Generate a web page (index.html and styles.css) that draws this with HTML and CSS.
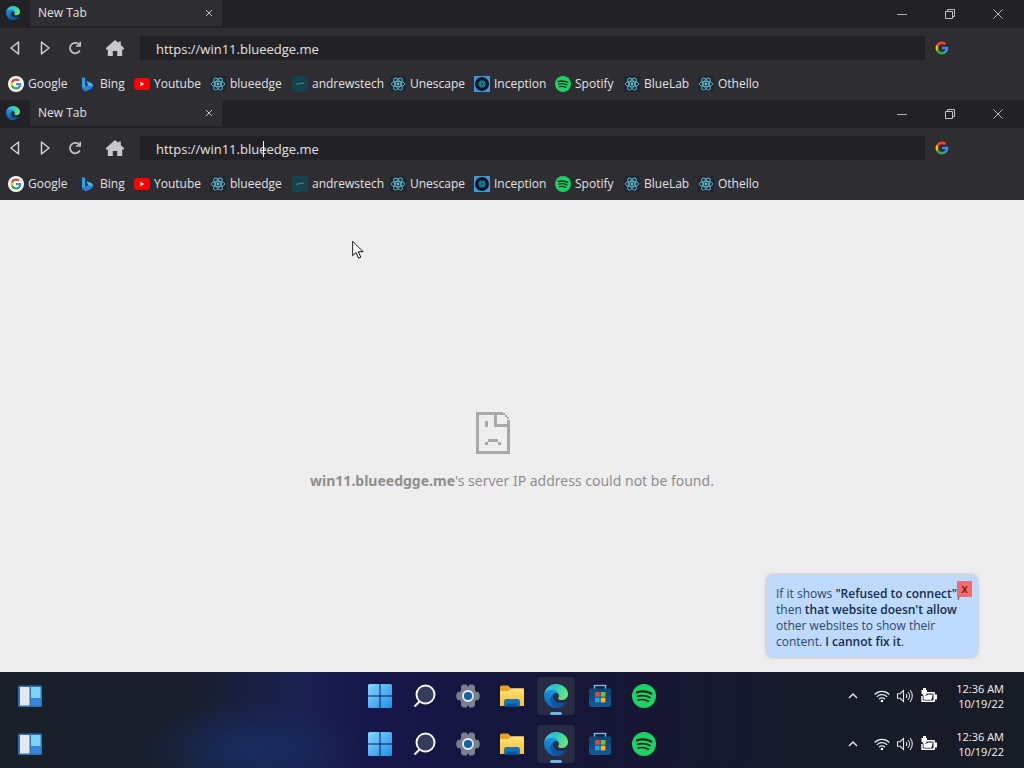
FILE: index.html
```
<!DOCTYPE html>
<html lang="en">
<head>
<meta charset="utf-8">
<meta name="viewport" content="width=device-width, initial-scale=1">
<title>New Tab</title>
<link rel="stylesheet" href="styles.css">
</head>
<body>
<svg class="sprite" aria-hidden="true">
  <defs>
    <linearGradient id="edge-a" x1=".2" y1=".5" x2="1" y2=".7"><stop offset="0" stop-color="#0c59a4"/><stop offset="1" stop-color="#114a8b"/></linearGradient>
    <linearGradient id="edge-b" x1=".7" y1="0" x2=".3" y2="1"><stop offset="0" stop-color="#1b9de2"/><stop offset=".5" stop-color="#1384cf"/><stop offset="1" stop-color="#0a60b0"/></linearGradient>
    <linearGradient id="edge-c" x1="0" y1=".3" x2="1" y2=".6"><stop offset="0" stop-color="#35c1f1"/><stop offset=".4" stop-color="#2fc3c6"/><stop offset="1" stop-color="#66eb6e"/></linearGradient>
    <linearGradient id="win" x1="0" y1="0" x2="1" y2="1"><stop offset="0" stop-color="#7fd8fd"/><stop offset="1" stop-color="#1d8fec"/></linearGradient>
    <linearGradient id="folder" x1="0" y1="0" x2="0" y2="1"><stop offset="0" stop-color="#ffe184"/><stop offset="1" stop-color="#fcc01f"/></linearGradient>
    <linearGradient id="bing" x1="0" y1="0" x2="1" y2="1"><stop offset="0" stop-color="#2a8cf0"/><stop offset="1" stop-color="#36b5e8"/></linearGradient>
    <linearGradient id="store" x1="0" y1="0" x2="0" y2="1"><stop offset="0" stop-color="#0c4676"/><stop offset="1" stop-color="#145a94"/></linearGradient>
  </defs>
  <symbol id="i-edge" viewBox="0 0 256 256"><g transform="translate(-4.6 -4.9)">
    <path fill="url(#edge-a)" d="M235.68 195.46a93.73 93.73 0 01-10.54 4.71 101.87 101.87 0 01-35.9 6.46c-47.32 0-88.54-32.55-88.54-74.32A31.48 31.48 0 01117.13 105c-42.8 1.8-53.8 46.4-53.8 72.53 0 73.88 68.09 81.37 82.76 81.37 7.91 0 19.84-2.3 27-4.56l1.31-.44a128.34 128.34 0 0066.6-52.8 4 4 0 00-5.32-5.64z"/>
    <path fill="url(#edge-b)" d="M110.34 246.34A79.2 79.2 0 0187.6 225a80.72 80.72 0 0129.53-120c3.12-1.47 8.45-4.13 15.54-4a32.35 32.35 0 0125.69 13 31.88 31.88 0 016.36 18.66c0-.21 24.46-79.6-80-79.6-43.9 0-80 41.66-80 78.21a130.15 130.15 0 0012.11 56 128 128 0 00156.38 67.11 75.55 75.55 0 01-62.78-8z"/>
    <path fill="url(#edge-c)" d="M156.94 153.78c-.81 1.05-3.3 2.5-3.3 5.66 0 2.61 1.7 5.12 4.72 7.23 14.38 10 41.49 8.68 41.56 8.68a59.56 59.56 0 0030.27-8.35 61.38 61.38 0 0030.43-52.88c.26-22.41-8-37.31-11.34-43.91-21.19-41.45-66.93-65.29-116.67-65.29a128 128 0 00-128 126.2c.48-36.54 36.8-66.05 80-66.05 3.5 0 23.46.34 42 10.07 16.34 8.58 24.9 18.94 30.85 29.21 6.18 10.67 7.28 24.15 7.28 29.52s-2.74 13.33-7.8 19.91z"/></g></symbol>
  <symbol id="i-g" viewBox="0 0 24 24">
    <path fill="#4285f4" d="M22.56 12.25c0-.78-.07-1.53-.2-2.25H12v4.26h5.92c-.26 1.37-1.04 2.53-2.21 3.31v2.77h3.57c2.08-1.92 3.28-4.74 3.28-8.09z"/>
    <path fill="#34a853" d="M12 23c2.97 0 5.46-.98 7.28-2.66l-3.57-2.77c-.98.66-2.23 1.06-3.71 1.06-2.86 0-5.29-1.93-6.16-4.53H2.18v2.84C3.99 20.53 7.7 23 12 23z"/>
    <path fill="#fbbc05" d="M5.84 14.09c-.22-.66-.35-1.36-.35-2.09s.13-1.43.35-2.09V7.07H2.18C1.43 8.55 1 10.22 1 12s.43 3.45 1.18 4.93l3.66-2.84z"/>
    <path fill="#ea4335" d="M12 5.38c1.62 0 3.06.56 4.21 1.64l3.15-3.15C17.45 2.09 14.97 1 12 1 7.7 1 3.99 3.47 2.18 7.07l3.66 2.84c.87-2.6 3.3-4.53 6.16-4.53z"/></symbol>
  <symbol id="i-google" viewBox="0 0 16 16"><circle cx="8" cy="8" r="8" fill="#fff"/><use href="#i-g" x="2" y="2" width="12" height="12"/></symbol>
  <symbol id="i-bing" viewBox="0 0 16 16"><path fill="url(#bing)" d="M2 1l3.200 1v8.600L2 12.800z"/><path fill="#2f7fe0" d="M2 12.800l3.200-2.300 3-1.500 4.500-.4c.2 2-.6 3.600-1.800 4.400L5.500 15.500z"/><path fill="#45b8ee" d="M6.300 5l5 2c1.300.5 1.700 2 1.400 3.600L8.200 9.300z"/></symbol>
  <symbol id="i-youtube" viewBox="0 0 16 16"><rect y="2" width="16" height="12" rx="3" fill="#f00"/><path fill="#fff" d="M6.500 5.800v4.400L10.300 8z"/></symbol>
  <symbol id="i-react" viewBox="0 0 16 16"><rect width="16" height="16" rx="2" fill="#20262f"/><g fill="none" stroke="#5fb9cd" stroke-width=".9"><ellipse cx="8" cy="8" rx="6.800" ry="2.700"/><ellipse cx="8" cy="8" rx="6.800" ry="2.700" transform="rotate(60 8 8)"/><ellipse cx="8" cy="8" rx="6.800" ry="2.700" transform="rotate(120 8 8)"/></g><circle cx="8" cy="8" r="1.400" fill="#61c5da"/></symbol>
  <symbol id="i-andrews" viewBox="0 0 16 16"><rect width="16" height="16" fill="#17414b"/><path d="M4 8.500l3-.8 5-.5" stroke="#3f7f8b" stroke-width="1.200" fill="none"/></symbol>
  <symbol id="i-inception" viewBox="0 0 16 16"><rect width="16" height="16" fill="#3a9be4"/><circle cx="8" cy="8" r="7" fill="#06151f"/><circle cx="8" cy="8" r="3.700" fill="#0b4250"/><g fill="none" stroke="#1c8ea5" stroke-width=".7"><ellipse cx="8" cy="8" rx="3.600" ry="1.500"/><ellipse cx="8" cy="8" rx="3.600" ry="1.500" transform="rotate(60 8 8)"/><ellipse cx="8" cy="8" rx="3.600" ry="1.500" transform="rotate(120 8 8)"/></g></symbol>
  <symbol id="i-spotify" viewBox="0 0 24 24"><circle cx="12" cy="12" r="12" fill="#1fd164"/><g fill="none" stroke="#152b1d" stroke-linecap="round"><path d="M5 8.300c5-1.400 10-1 14.200 1.300" stroke-width="2.300"/><path d="M5.600 12.300c4.300-1.200 8.600-.8 12.200 1.200" stroke-width="1.900"/><path d="M6.200 16c3.600-.9 7-.6 10.200 1.200" stroke-width="1.600"/></g></symbol>
  <symbol id="i-back" viewBox="0 0 16 16"><path d="M11.500 2v12L4 8z" fill="none" stroke="#d2d2d4" stroke-width="1.500" stroke-linejoin="round"/></symbol>
  <symbol id="i-forward" viewBox="0 0 16 16"><path d="M4.500 2v12L12 8z" fill="none" stroke="#d2d2d4" stroke-width="1.500" stroke-linejoin="round"/></symbol>
  <symbol id="i-reload" viewBox="0 0 16 16"><path d="M12.500 5.200A5.200 5.200 0 1 0 12.800 10.500" fill="none" stroke="#c6c6c9" stroke-width="1.700"/><path d="M14 1.700v5.100H8.900V5.300h3.500V1.700z" fill="#c6c6c9"/></symbol>
  <symbol id="i-home" viewBox="0 0 20 18"><path fill="#c9c9cd" d="M10 1l3.500 3V2.500h2.300V6L19 9v1.500h-1.800V17h-5v-5H7.800v5h-5v-6.500H1V9z"/></symbol>
  <symbol id="i-tabclose" viewBox="0 0 8 8"><path d="M1 1l6 6M7 1L1 7" stroke="#c4c4c6" stroke-width="1"/></symbol>
  <symbol id="i-min" viewBox="0 0 12 12"><path d="M1 6.500h10" stroke="#b0b0b2"/></symbol>
  <symbol id="i-restore" viewBox="0 0 12 12"><path d="M1.500 3.500h7v7h-7zM3.500 3V1.500h7v7H9" fill="none" stroke="#c4c4c6"/></symbol>
  <symbol id="i-close" viewBox="0 0 12 12"><path d="M1.500 1.500l9 9M10.500 1.500l-9 9" stroke="#c0c0c2"/></symbol>
  <symbol id="i-sad" viewBox="0 0 34 42" shape-rendering="crispEdges"><g fill="#a8a8a8"><path d="M0 0h27v3H3v36h28V15H18V0h3v12h10V8h3v34H0z"/><path d="M27 1h2v2h-2zM29 3h2v2h-2zM31 5h2v2h-2zM9 9h3v6H9zM12 27h10v3H12zM9 30h3v3H9zM22 30h3v3h-3z"/></g></symbol>
  <symbol id="i-widgets" viewBox="0 0 24 24"><rect y="1.500" width="24" height="21.500" rx="1.500" fill="#2d72b3"/><rect x="2" y="3" width="9.500" height="18.500" fill="#e8e8f3"/><rect x="13" y="3" width="9.500" height="11" fill="#7fd3fb"/><rect x="13" y="14" width="9.500" height="7.500" fill="#3788da"/></symbol>
  <symbol id="i-start" viewBox="0 0 24 24"><path fill="url(#win)" d="M1.500 0h10v11.500H0v-10A1.500 1.500 0 0 1 1.500 0zM12.500 0h10A1.500 1.500 0 0 1 24 1.500v10H12.500zM0 12.500h11.500V24h-10A1.500 1.500 0 0 1 0 22.500zM12.500 12.500H24v10a1.500 1.500 0 0 1-1.500 1.500h-10z"/></symbol>
  <symbol id="i-search" viewBox="0 0 24 24"><path d="M8 17L2.500 22.500" stroke="#f5f5fa" stroke-width="2.200"/><circle cx="13.500" cy="10.500" r="9" fill="#343c5c" stroke="#f5f5fa" stroke-width="2"/></symbol>
  <symbol id="i-settings" viewBox="0 0 24 24"><path fill="#78818d" stroke="#78818d" stroke-width="2" stroke-linejoin="round" d="M8 1.500h2l1 2h2l1-2h2l2 1v4l1.500 2.500H22l1 3-1 3h-2.500L18 17.500v4l-2 1h-2l-1-2h-2l-1 2H8l-2-1v-4L4.500 15H2l-1-3 1-3h2.500L6 6.500v-4z"/><circle cx="12" cy="12" r="5" fill="#1762a5" stroke="#e8eef5" stroke-width="1.800"/></symbol>
  <symbol id="i-folder" viewBox="0 0 24 24"><path fill="#e9a320" d="M0 3a1.500 1.500 0 0 1 1.500-1.500H8l3 2.700h11.500A1.500 1.500 0 0 1 24 5.700V12H0z"/><path fill="url(#folder)" d="M0 7h8.500l3-2.500H24V22H0z"/><path fill="#1872bb" d="M4 22.500v-5A2.500 2.500 0 0 1 6.500 15h11a2.500 2.500 0 0 1 2.500 2.500v5z"/><path fill="#0f559a" d="M7 19.500h10v3H7z"/></symbol>
  <symbol id="i-store" viewBox="0 0 24 24"><path d="M6.500 6V1.500h11V6" fill="none" stroke="#69b9dc" stroke-width="1.600"/><path fill="url(#store)" d="M1 4.500h22V20a3 3 0 0 1-3 3H4a3 3 0 0 1-3-3z"/><path fill="#e04b35" d="M7 8h4.700v4.700H7z"/><path fill="#7bb82d" d="M12.700 8h4.700v4.700h-4.700z"/><path fill="#21a2e8" d="M7 13.700h4.700v4.700H7z"/><path fill="#fbb91c" d="M12.700 13.700h4.700v4.700h-4.700z"/></symbol>
  <symbol id="i-chevron" viewBox="0 0 12 12"><path d="M2 8l4-4 4 4" fill="none" stroke="#eee" stroke-width="1.300"/></symbol>
  <symbol id="i-wifi" viewBox="0 0 16 16"><g fill="none" stroke="#e8eaee" stroke-width="1.200"><path d="M.7 6.500a10.300 10.300 0 0 1 14.600 0M2.800 8.900a7.300 7.300 0 0 1 10.400 0M5 11.200a4.200 4.200 0 0 1 6 0"/></g><circle cx="8" cy="13" r="1.300" fill="#fff"/></symbol>
  <symbol id="i-sound" viewBox="0 0 18 16"><path d="M1.500 5.700h2.600L7.500 2.500v11L4.100 10.300H1.500zM10 6a3 3 0 0 1 0 4M12 4a6 6 0 0 1 0 8M14 2a9 9 0 0 1 0 12" fill="none" stroke="#e0e3e8" stroke-width="1.100"/></symbol>
  <symbol id="i-battery" viewBox="0 0 18 16"><path d="M7 4.700h7.200v8.600H2V8" fill="none" stroke="#fff" stroke-width="1.500" stroke-linejoin="round"/><path fill="#fff" d="M15 6.500h2v5h-2zM3.500 9.500L8 6.500h4.700l-1.200 5.300h-8zM3 0h3v2h1v3.500L5.500 7.500v3h-2v-3L1.500 5.500V2H3z"/></symbol>
  <symbol id="i-cursor" viewBox="0 0 12 19"><path d="M.7 1.200v14.500l3.400-3.200 2.400 5.700 2.300-1-2.400-5.500h4.700z" fill="#fff" stroke="#111" stroke-width="1"/></symbol>
</svg>

<main class="desktop">
  <header class="browser">
    <div class="tabbar">
      <svg class="app-icon"><use href="#i-edge"/></svg>
      <div class="tab"><span>New Tab</span><button class="plain" aria-label="Close tab"><svg class="s8"><use href="#i-tabclose"/></svg></button></div>
      <div class="window-buttons">
        <button class="plain" aria-label="Minimize"><svg class="s12"><use href="#i-min"/></svg></button>
        <button class="plain" aria-label="Restore"><svg class="s12"><use href="#i-restore"/></svg></button>
        <button class="plain" aria-label="Close"><svg class="s12"><use href="#i-close"/></svg></button>
      </div>
    </div>
    <div class="toolbar">
      <div class="nav">
        <button class="plain" aria-label="Back"><svg class="s16"><use href="#i-back"/></svg></button>
        <button class="plain" aria-label="Forward"><svg class="s16"><use href="#i-forward"/></svg></button>
        <button class="plain" aria-label="Reload"><svg class="s16"><use href="#i-reload"/></svg></button>
        <button class="plain home" aria-label="Home"><svg class="s20"><use href="#i-home"/></svg></button>
      </div>
      <div class="address-wrap">
        <input class="address" type="text" aria-label="Address" value="https://win11.blueedge.me">
      </div>
      <button class="plain engine" aria-label="Search with Google"><svg class="s14"><use href="#i-g"/></svg></button>
    </div>
    <nav class="bookmarks" aria-label="Bookmarks">
      <a href="#"><svg class="s16"><use href="#i-google"/></svg>Google</a>
      <a href="#"><svg class="s16"><use href="#i-bing"/></svg>Bing</a>
      <a href="#"><svg class="s16"><use href="#i-youtube"/></svg>Youtube</a>
      <a href="#"><svg class="s16"><use href="#i-react"/></svg>blueedge</a>
      <a href="#"><svg class="s16"><use href="#i-andrews"/></svg>andrewstech</a>
      <a href="#"><svg class="s16"><use href="#i-react"/></svg>Unescape</a>
      <a href="#"><svg class="s16"><use href="#i-inception"/></svg>Inception</a>
      <a href="#"><svg class="s16"><use href="#i-spotify"/></svg>Spotify</a>
      <a href="#"><svg class="s16"><use href="#i-react"/></svg>BlueLab</a>
      <a href="#"><svg class="s16"><use href="#i-react"/></svg>Othello</a>
    </nav>
  </header>

  <header class="browser">
    <div class="tabbar">
      <svg class="app-icon"><use href="#i-edge"/></svg>
      <div class="tab"><span>New Tab</span><button class="plain" aria-label="Close tab"><svg class="s8"><use href="#i-tabclose"/></svg></button></div>
      <div class="window-buttons">
        <button class="plain" aria-label="Minimize"><svg class="s12"><use href="#i-min"/></svg></button>
        <button class="plain" aria-label="Restore"><svg class="s12"><use href="#i-restore"/></svg></button>
        <button class="plain" aria-label="Close"><svg class="s12"><use href="#i-close"/></svg></button>
      </div>
    </div>
    <div class="toolbar">
      <div class="nav">
        <button class="plain" aria-label="Back"><svg class="s16"><use href="#i-back"/></svg></button>
        <button class="plain" aria-label="Forward"><svg class="s16"><use href="#i-forward"/></svg></button>
        <button class="plain" aria-label="Reload"><svg class="s16"><use href="#i-reload"/></svg></button>
        <button class="plain home" aria-label="Home"><svg class="s20"><use href="#i-home"/></svg></button>
      </div>
      <div class="address-wrap">
        <input class="address" type="text" aria-label="Address" value="https://win11.blueedge.me">
        <span class="caret"></span>
      </div>
      <button class="plain engine" aria-label="Search with Google"><svg class="s14"><use href="#i-g"/></svg></button>
    </div>
    <nav class="bookmarks" aria-label="Bookmarks">
      <a href="#"><svg class="s16"><use href="#i-google"/></svg>Google</a>
      <a href="#"><svg class="s16"><use href="#i-bing"/></svg>Bing</a>
      <a href="#"><svg class="s16"><use href="#i-youtube"/></svg>Youtube</a>
      <a href="#"><svg class="s16"><use href="#i-react"/></svg>blueedge</a>
      <a href="#"><svg class="s16"><use href="#i-andrews"/></svg>andrewstech</a>
      <a href="#"><svg class="s16"><use href="#i-react"/></svg>Unescape</a>
      <a href="#"><svg class="s16"><use href="#i-inception"/></svg>Inception</a>
      <a href="#"><svg class="s16"><use href="#i-spotify"/></svg>Spotify</a>
      <a href="#"><svg class="s16"><use href="#i-react"/></svg>BlueLab</a>
      <a href="#"><svg class="s16"><use href="#i-react"/></svg>Othello</a>
    </nav>
  </header>

  <section class="page">
    <div class="error">
      <svg class="sad"><use href="#i-sad"/></svg>
      <p><b>win11.blueedgge.me</b>'s server IP address could not be found.</p>
    </div>
    <aside class="notice">
      <button class="notice-close" aria-label="Close notice">x</button>
      <p>If it shows <b>"Refused to connect"</b>, then <b>that website doesn't allow</b> other websites to show their content. <b>I cannot fix it</b>.</p>
    </aside>
    <svg class="cursor" aria-hidden="true"><use href="#i-cursor"/></svg>
  </section>

  <footer class="taskbars">
    <div class="taskbar">
      <button class="plain widgets" aria-label="Widgets"><svg class="s24"><use href="#i-widgets"/></svg></button>
      <div class="apps">
        <button class="plain app" aria-label="Start"><svg class="s24"><use href="#i-start"/></svg></button>
        <button class="plain app" aria-label="Search"><svg class="s24"><use href="#i-search"/></svg></button>
        <button class="plain app" aria-label="Settings"><svg class="s24"><use href="#i-settings"/></svg></button>
        <button class="plain app" aria-label="File Explorer"><svg class="s24"><use href="#i-folder"/></svg></button>
        <button class="plain app active" aria-label="Edge"><svg class="s24"><use href="#i-edge"/></svg></button>
        <button class="plain app" aria-label="Store"><svg class="s24"><use href="#i-store"/></svg></button>
        <button class="plain app" aria-label="Spotify"><svg class="s24"><use href="#i-spotify"/></svg></button>
      </div>
      <div class="tray">
        <button class="plain more" aria-label="Show hidden icons"><svg class="s12"><use href="#i-chevron"/></svg></button>
        <button class="plain status" aria-label="Network, sound, battery"><svg class="s16"><use href="#i-wifi"/></svg><svg class="wide"><use href="#i-sound"/></svg><svg class="wide"><use href="#i-battery"/></svg></button>
        <div class="clock"><span>12:36 AM</span><span>10/19/22</span></div>
      </div>
    </div>
    <div class="taskbar">
      <button class="plain widgets" aria-label="Widgets"><svg class="s24"><use href="#i-widgets"/></svg></button>
      <div class="apps">
        <button class="plain app" aria-label="Start"><svg class="s24"><use href="#i-start"/></svg></button>
        <button class="plain app" aria-label="Search"><svg class="s24"><use href="#i-search"/></svg></button>
        <button class="plain app" aria-label="Settings"><svg class="s24"><use href="#i-settings"/></svg></button>
        <button class="plain app" aria-label="File Explorer"><svg class="s24"><use href="#i-folder"/></svg></button>
        <button class="plain app active" aria-label="Edge"><svg class="s24"><use href="#i-edge"/></svg></button>
        <button class="plain app" aria-label="Store"><svg class="s24"><use href="#i-store"/></svg></button>
        <button class="plain app" aria-label="Spotify"><svg class="s24"><use href="#i-spotify"/></svg></button>
      </div>
      <div class="tray">
        <button class="plain more" aria-label="Show hidden icons"><svg class="s12"><use href="#i-chevron"/></svg></button>
        <button class="plain status" aria-label="Network, sound, battery"><svg class="s16"><use href="#i-wifi"/></svg><svg class="wide"><use href="#i-sound"/></svg><svg class="wide"><use href="#i-battery"/></svg></button>
        <div class="clock"><span>12:36 AM</span><span>10/19/22</span></div>
      </div>
    </div>
  </footer>
</main>
</body>
</html>
```
FILE: styles.css
```
* { box-sizing: border-box; }
body {
  margin: 0;
  font: 12px/16px "Open Sans", "Noto Sans", sans-serif;
  color: #e2e2e4;
}
button, input { font: inherit; color: inherit; }
svg { display: block; flex: none; }
p { margin: 0; }
.sprite { position: absolute; width: 0; height: 0; }
.plain {
  display: flex;
  align-items: center;
  justify-content: center;
  padding: 0;
  border: 0;
  background: none;
}
.s8 { width: 8px; height: 8px; }
.s12 { width: 12px; height: 12px; }
.s14 { width: 14px; height: 14px; }
.s16 { width: 16px; height: 16px; }
.s20 { width: 20px; height: 18px; }
.s24 { width: 24px; height: 24px; }
.wide { width: 18px; height: 16px; }

.desktop { display: flex; flex-direction: column; min-height: 100vh; }

.browser { background: #2d2d32; }
.tabbar { display: flex; align-items: flex-start; height: 28px; padding-left: 6px; background: #222226; }
.app-icon { width: 14px; height: 14px; margin: 6px 10px 0 0; }
.tab {
  display: flex;
  align-items: center;
  justify-content: space-between;
  width: 192px;
  height: 26px;
  padding: 0 9px 0 8px;
  background: #2d2d32;
}
.window-buttons { display: flex; margin: 0 2px 0 auto; }
.window-buttons .plain { width: 48px; height: 28px; }
.toolbar { display: flex; align-items: center; height: 40px; }
.nav { display: flex; align-items: center; }
.nav .plain { width: 30px; height: 30px; }
.nav .home { width: 50px; }
.address-wrap { position: relative; display: flex; flex: 1; }
.address {
  flex: 1;
  min-width: 0;
  height: 24px;
  padding: 2px 16px 0;
  border: 0;
  outline: 0;
  background: #222226;
  font-size: 13px;
}
.caret { position: absolute; left: 123px; top: 5px; width: 1px; height: 16px; background: #fff; }
.engine { width: 34px; margin-right: 65px; }
.bookmarks {
  display: grid;
  grid-template-columns: 72px 54px 76px 82px 98px 84px 81px 69px 74px auto;
  align-items: center;
  height: 32px;
  padding-left: 8px;
}
.bookmarks a { display: flex; align-items: center; gap: 4px; color: inherit; text-decoration: none; }

.page {
  position: relative;
  display: flex;
  flex: 1;
  align-items: center;
  justify-content: center;
  background: #eee;
}
.error { padding-top: 30px; font: 14px/20px "Noto Sans", "Open Sans", sans-serif; color: #8e8e8e; }
.sad { width: 34px; height: 42px; margin: 0 0 17px 166px; }
.notice {
  position: absolute;
  right: 47px;
  bottom: 15px;
  width: 210px;
  padding: 11px 16px 7px 9px;
  border-radius: 6px;
  background: #bedaff;
  box-shadow: 0 0 4px #9ba9bd;
  color: #2c4769;
}
.notice p { position: relative; }
.notice b { font-weight: 600; color: #142c50; }
.notice-close {
  position: absolute;
  top: 6px;
  right: 5px;
  width: 15px;
  height: 16px;
  padding: 0;
  border: 0;
  background: #f46b6d;
  color: #7c1a24;
  font-weight: 600;
  line-height: 16px;
}
.cursor { position: absolute; left: 352px; top: 40px; width: 12px; height: 19px; }

.taskbars {
  background:
    radial-gradient(ellipse 110px 50px at 250px 78px, #182c60, transparent),
    linear-gradient(90deg, #19202a 0, #181e2b 18%, #1a2150 29%, #171649 37%, #15163c 50%, #161633 64%, #151a29 78%, #171c26 100%);
}
.taskbar { display: grid; grid-template-columns: 1fr auto 1fr; align-items: center; height: 48px; }
.widgets { justify-self: start; margin-left: 18px; }
.apps { display: flex; gap: 6px; }
.app { width: 38px; height: 38px; border-radius: 4px; }
.active { position: relative; background: #292a44; }
.active::after {
  content: "";
  position: absolute;
  bottom: 0;
  width: 12px;
  height: 3px;
  border-radius: 2px;
  background: #5fb8f0;
}
.tray { display: flex; align-items: center; justify-self: end; padding-right: 20px; }
.more { width: 28px; height: 32px; margin-right: 7px; }
.status { gap: 6px; margin-right: 18px; }
.clock { display: flex; flex-direction: column; align-items: flex-end; font-size: 11px; line-height: 15px; color: #f4f4f6; }
```
